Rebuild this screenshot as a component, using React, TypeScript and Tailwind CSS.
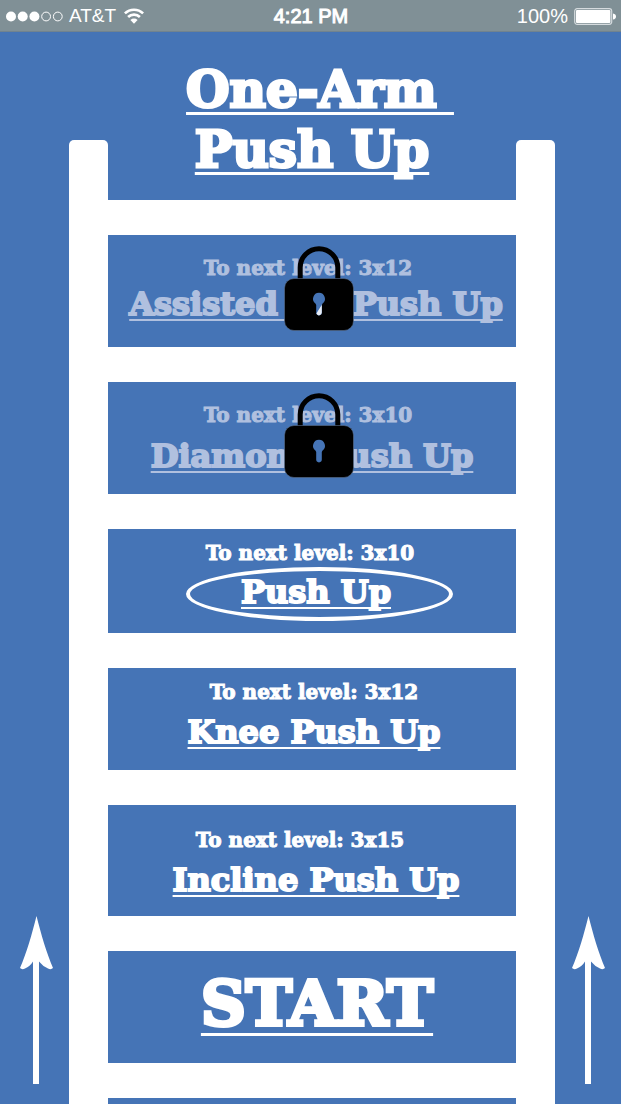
import React from "react";

type Rung = {
  goal: string;
  name: string;
  locked?: boolean;
  current?: boolean;
  glint?: boolean;
  panel: string;
  goalPad: string;
};

const rungs: Rung[] = [
  { goal: "3x12", name: "Assisted OA Push Up", locked: true, glint: true, panel: "min-h-[112px] pt-[19px] gap-0 pl-2", goalPad: "pr-4" },
  { goal: "3x10", name: "Diamond Push Up", locked: true, panel: "min-h-[112px] pt-[19px] gap-[5px]", goalPad: "pr-2" },
  { goal: "3x10", name: "Push Up", current: true, panel: "min-h-[104px] pt-[10px] gap-[3px] pl-2", goalPad: "pr-3" },
  { goal: "3x12", name: "Knee Push Up", panel: "min-h-[102px] pt-[10px] gap-1 pl-1", goalPad: "pr-0" },
  { goal: "3x15", name: "Incline Push Up", panel: "min-h-[111px] pt-[21px] gap-1 pl-2", goalPad: "pr-8" },
];

function Lock({ glint }: { glint?: boolean }) {
  return (
    <svg
      className="absolute left-1/2 top-[11px] -ml-7 h-[85px] w-[70px]"
      viewBox="0 0 70 85"
      role="img"
      aria-label="Locked"
    >
      <path d="M16.2 36V21.5a18.8 18.8 0 0 1 37.6 0V36" fill="none" stroke="#000" strokeWidth="5" />
      <rect x="0.5" y="32.5" width="69" height="52" rx="9.5" fill="#000" stroke="#5d718f" strokeWidth="0.6" />
      <path
        d="M35 46.8a6 6 0 0 1 3.4 10.9L37.8 59v7.6a2.8 2.8 0 0 1-5.6 0V59l-.6-1.3A6 6 0 0 1 35 46.8z"
        fill="#4574b6"
      />
      {glint && <path d="M38.4 57.7L37.8 59v7.6a2.8 2.8 0 0 1-5.4 1z" fill="#e8edf6" />}
    </svg>
  );
}

function Arrow() {
  return (
    <svg className="h-[168px] w-[33px]" viewBox="0 0 33 168" fill="#fff" aria-hidden="true">
      <path d="M16.5 0C21 18 26.500 37 33 52Q31 54 28 52.500Q23 50.500 19 45.500V168H13V45.500Q10 50.500 5 52.500Q2 54 0 52C6.500 37 12 18 16.500 0z" />
    </svg>
  );
}

function StatusBar() {
  return (
    <header className="grid h-8 grid-cols-3 items-center border-b border-[#71838f] bg-[#809096] pl-[6px] pr-[5px] font-['Liberation_Sans',Arial,sans-serif] text-[20px] font-normal leading-8 text-white">
      <div className="flex items-center">
        <svg className="h-[11px] w-[58px]" viewBox="0 0 58 11" aria-label="Signal strength 3 of 5" role="img">
          <circle cx="5" cy="5.500" r="5" fill="#fff" />
          <circle cx="16.700" cy="5.500" r="5" fill="#fff" />
          <circle cx="28.400" cy="5.500" r="5" fill="#fff" />
          <circle cx="40.100" cy="5.500" r="4.400" fill="none" stroke="#fff" />
          <circle cx="51.800" cy="5.500" r="4.400" fill="none" stroke="#fff" />
        </svg>
        <span className="pl-[5px] text-[19px]">AT&amp;T</span>
        <svg className="ml-2 h-4 w-5" viewBox="0 0 20 16" fill="none" stroke="#fff" strokeWidth="2.600" aria-hidden="true">
          <path d="M.9 5.400a13 13 0 0 1 18.200 0" />
          <path d="M4.100 9a8.400 8.400 0 0 1 11.800 0" />
          <path d="M10 15.800L6.400 12a5.200 5.200 0 0 1 7.200 0z" fill="#fff" stroke="none" />
        </svg>
      </div>
      <time className="text-center [-webkit-text-stroke:1px_white] text-[20px]">4:21 PM</time>
      <div className="flex items-center justify-end gap-[6px]">
        <span>100%</span>
        <svg className="h-[17px] w-[42px]" viewBox="0 0 42 17" aria-label="Battery full" role="img">
          <rect x="0.700" y="0.700" width="37" height="15.600" rx="2.500" fill="none" stroke="#d5dbde" strokeWidth="1.200" />
          <rect x="2" y="2" width="34.400" height="13" rx="1" fill="#fff" />
          <path d="M39 5.500q3 .5 3 3t-3 3z" fill="#fff" />
        </svg>
      </div>
    </header>
  );
}

const linkStyle = "underline [text-decoration-skip-ink:none]";

export default function App() {
  return (
    <div className="flex min-h-screen flex-col bg-[#4574b6] font-['DejaVu_Serif',serif] font-bold text-white">
      <StatusBar />
      <main className="flex grow">
        <div className="flex w-[69px] shrink-0 items-end justify-center pb-5 pl-1">
          <Arrow />
        </div>
        <div className="mt-[108px] w-[39px] shrink-0 rounded-t-[5px] bg-white" />
        <div className="flex min-w-0 grow flex-col">
          <h1 className="flex h-[168px] flex-col items-center pt-7 text-[50px] leading-[60px] [-webkit-text-stroke:3px_white]">
            <span className={`${linkStyle} whitespace-nowrap pl-4 decoration-[3px] underline-offset-[5px]`}>One-Arm&nbsp;</span>
            <span className={`${linkStyle} whitespace-nowrap decoration-[3px] underline-offset-[5px]`}>Push Up</span>
          </h1>
          <div className="flex grow flex-col gap-[35px] bg-white pt-[35px]">
            {rungs.map((r) => (
              <section
                key={r.name}
                className={`relative flex flex-col items-center whitespace-nowrap bg-[#4574b6] ${r.panel} ${r.locked ? "text-[#b0c0df]" : "text-white"}`}
              >
                <p className={`text-[20px] leading-7 [-webkit-text-stroke:1px_currentColor] ${r.goalPad}`}>
                  To next level: {r.goal}
                </p>
                <a
                  href="#exercise"
                  className={`${linkStyle} text-[32px] leading-[44px] decoration-2 underline-offset-[4px] [-webkit-text-stroke:2px_currentColor]`}
                >
                  {r.name}
                </a>
                {r.locked && <Lock glint={r.glint} />}
                {r.current && (
                  <span className="absolute left-1/2 top-[38px] -ml-[126px] h-[54px] w-[267px] rounded-[50%] border-4 border-white" />
                )}
              </section>
            ))}
            <section className="flex min-h-[112px] justify-center bg-[#4574b6] pl-[10px] pt-[17px]">
              <a
                href="#start"
                className={`${linkStyle} text-[62px] leading-[72px] decoration-[3px] underline-offset-[8px] [-webkit-text-stroke:4px_white]`}
              >
                START
              </a>
            </section>
            <div className="min-h-[6px] grow bg-[#4574b6]" />
          </div>
        </div>
        <div className="mt-[108px] w-[39px] shrink-0 rounded-t-[5px] bg-white" />
        <div className="flex w-[66px] shrink-0 items-end justify-center pb-5">
          <Arrow />
        </div>
      </main>
    </div>
  );
}
